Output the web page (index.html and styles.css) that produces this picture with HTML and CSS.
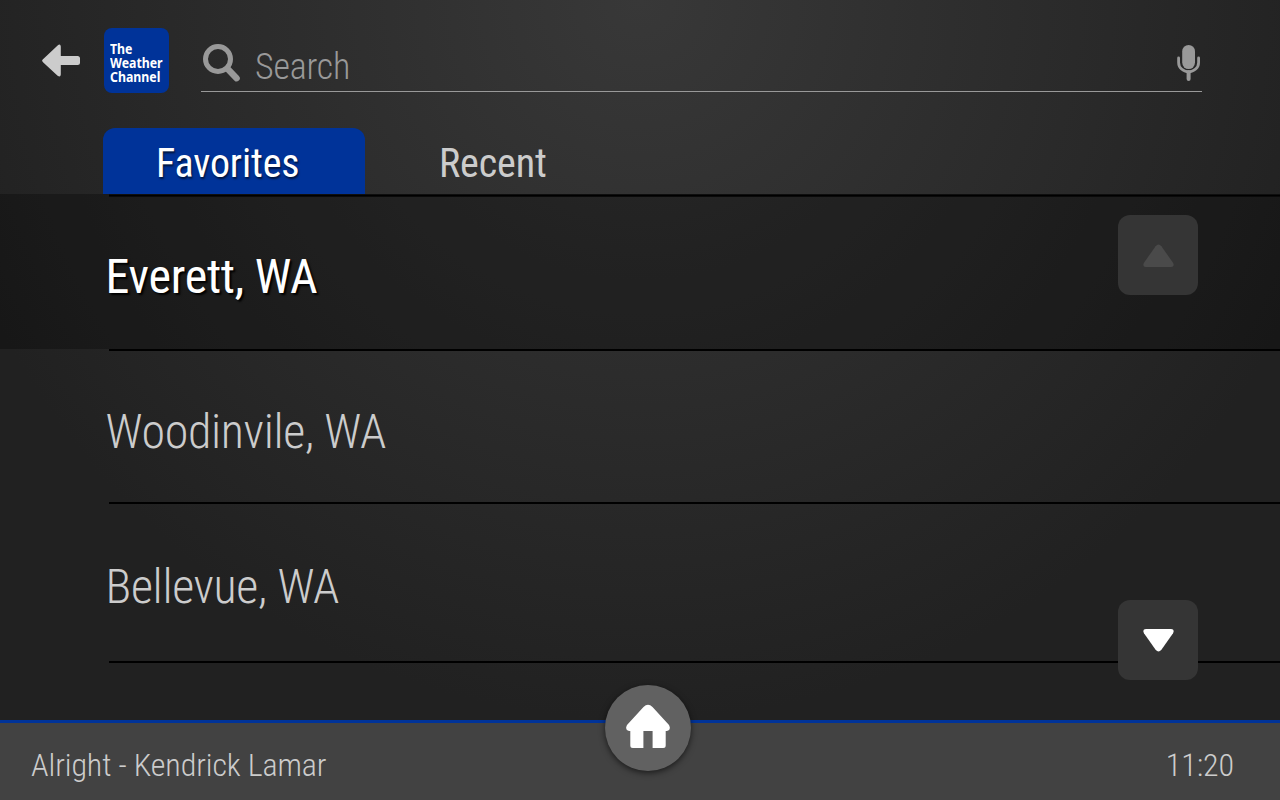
FILE: index.html
```html
<!DOCTYPE html>
<html lang="en">
<head>
<meta charset="utf-8">
<title>The Weather Channel</title>
<link rel="stylesheet" href="styles.css">
</head>
<body>
<div class="screen">
  <header class="header">
    <svg class="back" width="40" height="34" viewBox="0 0 40 34"><path d="M2 15.200 16.600 1.400Q19.500-.8 19.800 2.600V12H36.500Q39 12 39 14.500V18.500Q39 21 36.500 21H19.800V30.500Q19.500 33.800 16.600 31.700L2 18.200Q.2 16.500 2 15.200Z" fill="#ccc"/></svg>
    <div class="logo"><div class="wordmark">The<br>Weather<br>Channel</div></div>
    <div class="search">
      <svg class="lens" width="40" height="40" viewBox="0 0 40 40" fill="none" stroke="#999"><circle cx="16" cy="16" r="12.500" stroke-width="5"/><path d="M25.500 25.800 34.600 35.200" stroke-width="6.400" stroke-linecap="round"/></svg>
      <span class="placeholder">Search</span>
      <svg class="mic" width="24" height="38" viewBox="0 0 24 38"><rect x="5.200" y="1" width="12.800" height="24" rx="6.400" fill="#999"/><path d="M1.600 14V18.500A10 9.300 0 0 0 21.600 18.500V14" fill="none" stroke="#999" stroke-width="2.800" stroke-linecap="round"/><path d="M11.600 28V35" stroke="#999" stroke-width="4" stroke-linecap="round"/></svg>
    </div>
  </header>
  <nav class="tabs">
    <div class="tab active">Favorites</div>
    <div class="tab">Recent</div>
  </nav>
  <main class="list">
    <div class="row first"><div class="city">Everett, WA</div></div>
    <div class="row second"><div class="city">Woodinvile, WA</div></div>
    <div class="row third"><div class="city">Bellevue, WA</div></div>
    <div class="row last"><div class="city"></div></div>
    <div class="scroll up"><svg width="31" height="23" viewBox="0 0 32 23" preserveAspectRatio="none"><path d="M13 2.200Q16-1.400 19 2.200L31 18.800Q33 22.700 29 23H3Q-1 22.700 1 18.800Z" fill="#4a4a4a"/></svg></div>
    <div class="scroll down"><svg width="31" height="23" viewBox="0 0 32 23" preserveAspectRatio="none"><path d="M13 20.800Q16 24.400 19 20.800L31 4.200Q33 .3 29 0H3Q-1 .3 1 4.200Z" fill="#fff"/></svg></div>
  </main>
  <footer class="footer">
    <span class="track">Alright - Kendrick Lamar</span>
    <span class="clock">11:20</span>
    <div class="home"><svg width="46" height="46" viewBox="0 0 46 46"><path d="M18.500 3Q23-1.500 27.500 3L44 21Q46.500 26 42 27H40.700V41.500Q40.700 44 38.200 44H27.600V27H18.400V44H7.800Q5.300 44 5.300 41.500V27H4Q-.5 26 2 21Z" fill="#fff"/></svg></div>
  </footer>
</div>
</body>
</html>
```
FILE: styles.css
```css
* { box-sizing: border-box; }
body { margin: 0; }
svg { display: block; }
.screen {
  width: 1280px;
  height: 800px;
  overflow: hidden;
  display: flex;
  flex-direction: column;
  font-family: "Roboto Condensed", Roboto, sans-serif;
  color: #ccc;
  background: radial-gradient(circle at 640px 0, #383838 0, #212121 720px);
}
.header { height: 128px; display: flex; align-items: flex-start; }
.back { margin: 44px 0 0 41px; }
.logo {
  width: 65px;
  height: 65px;
  margin: 28px 0 0 23px;
  padding: 14px 0 0 6px;
  border-radius: 8px;
  background: #039;
  color: #fff;
}
.wordmark {
  font-family: "Noto Sans", sans-serif;
  font-weight: 700;
  font-size: 14px;
  line-height: 14px;
  transform: scaleX(.88);
  transform-origin: 0 0;
}
.search {
  width: 1001px;
  height: 65px;
  margin: 27px 0 0 32px;
  border-bottom: 1px solid #999;
  display: flex;
  align-items: flex-start;
}
.lens { margin: 16px 0 0 1px; }
.placeholder { flex: 1; margin: 19px 0 0 13px; font-size: 36px; line-height: 42px; font-weight: 300; letter-spacing: -.2px; color: #999; }
.mic { margin: 17px 1px 0 0; }
.tabs { height: 66px; padding-left: 103px; display: flex; }
.tab { width: 262px; height: 66px; padding: 12px 0 0 74px; font-size: 40px; line-height: 48px; letter-spacing: -.12px; }
.tab.active { padding-left: 53px; border-radius: 12px 12px 0 0; background: #039; color: #fff; text-shadow: 1px 2px 2px rgba(0,0,0,.6); }
.list { height: 526px; position: relative; }
.row { padding-left: 109px; }
.city { height: 100%; border-top: 2px solid #000; text-indent: -3.5px; font-size: 48px; line-height: 56px; font-weight: 300; letter-spacing: -.33px; }
.first { height: 155px; background: rgba(0,0,0,.28); }
.first .city { padding-top: 54px; border-top: 1px solid #0e0e0e; box-shadow: inset 0 1px #000, inset 0 2px #0a0a0a; color: #fff; font-weight: 400; letter-spacing: -.25px; text-shadow: 2px 2px 2px #000; }
.second { height: 153px; }
.second .city { padding-top: 53px; }
.third { height: 159px; }
.third .city { padding-top: 55px; }
.last { height: 59px; }
.scroll { position: absolute; left: 1118px; width: 80px; height: 80px; padding: 29px 0 0 25px; border-radius: 12px; background: #353535; }
.up { top: 21px; }
.down { top: 406px; }
.footer { position: relative; height: 80px; padding: 23px 46px 0 31px; border-top: 3px solid #039; background: #424242; display: flex; justify-content: space-between; font-size: 32px; line-height: 38px; font-weight: 300; letter-spacing: -.1px; }
.home { position: absolute; left: 605px; top: -38px; width: 86px; height: 86px; padding-bottom: 2px; border-radius: 50%; background: #616161; box-shadow: 0 2px 6px rgba(0,0,0,.6); display: flex; justify-content: center; align-items: center; }
```
